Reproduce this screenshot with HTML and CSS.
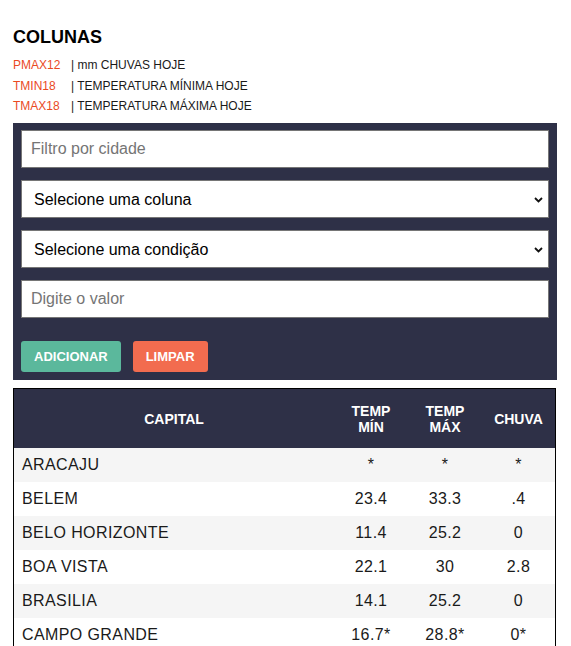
FILE: index.html
```html
<!DOCTYPE html>
<html lang="pt-BR">
<head>
<meta charset="utf-8">
<title>Colunas</title>
<link rel="stylesheet" href="styles.css">
</head>
<body>
<div class="page">
  <h2 class="title">COLUNAS</h2>
  <div class="legend">
    <div class="legend-row"><span class="code">PMAX12</span><span class="desc">| mm CHUVAS HOJE</span></div>
    <div class="legend-row"><span class="code">TMIN18</span><span class="desc">| TEMPERATURA MÍNIMA HOJE</span></div>
    <div class="legend-row"><span class="code">TMAX18</span><span class="desc">| TEMPERATURA MÁXIMA HOJE</span></div>
  </div>

  <div class="panel">
    <input class="field" type="text" placeholder="Filtro por cidade">
    <div class="select-wrap">
      <select class="field select">
        <option>Selecione uma coluna</option>
      </select>
      <svg class="chevron" width="9" height="6" viewBox="0 0 9 6"><path d="M1 1 L4.5 4.5 L8 1" fill="none" stroke="#111" stroke-width="1.8"/></svg>
    </div>
    <div class="select-wrap">
      <select class="field select">
        <option>Selecione uma condição</option>
      </select>
      <svg class="chevron" width="9" height="6" viewBox="0 0 9 6"><path d="M1 1 L4.5 4.5 L8 1" fill="none" stroke="#111" stroke-width="1.8"/></svg>
    </div>
    <input class="field" type="text" placeholder="Digite o valor">
    <div class="buttons">
      <button class="btn btn-add">ADICIONAR</button>
      <button class="btn btn-clear">LIMPAR</button>
    </div>
  </div>

  <table class="data">
    <thead>
      <tr>
        <th class="col-city">CAPITAL</th>
        <th class="col-num">TEMP<br>MÍN</th>
        <th class="col-num">TEMP<br>MÁX</th>
        <th class="col-rain">CHUVA</th>
      </tr>
    </thead>
    <tbody>
      <tr><td>ARACAJU</td><td>*</td><td>*</td><td>*</td></tr>
      <tr><td>BELEM</td><td>23.4</td><td>33.3</td><td>.4</td></tr>
      <tr><td>BELO HORIZONTE</td><td>11.4</td><td>25.2</td><td>0</td></tr>
      <tr><td>BOA VISTA</td><td>22.1</td><td>30</td><td>2.8</td></tr>
      <tr><td>BRASILIA</td><td>14.1</td><td>25.2</td><td>0</td></tr>
      <tr><td>CAMPO GRANDE</td><td>16.7*</td><td>28.8*</td><td>0*</td></tr>
    </tbody>
  </table>
</div>
</body>
</html>
```

FILE: styles.css
```css
html, body {
  margin: 0;
  padding: 0;
  background: #fff;
}

body {
  font-family: "Liberation Sans", Arial, sans-serif;
  color: #111;
}

.page {
  width: 544px;
  padding: 26px 0 0 13px;
}

.title {
  margin: 0;
  font-size: 18px;
  line-height: 22px;
  font-weight: bold;
  color: #000;
}

.legend {
  margin-top: 7px;
  font-size: 12px;
  line-height: 20.5px;
}

.legend-row {
  display: flex;
}

.code {
  width: 58px;
  color: #ea4a1f;
}

.desc {
  color: #1a1a1a;
}

.panel {
  margin-top: 6.5px;
  background: #2e3047;
  padding: 7px 8px 8px;
  display: flex;
  flex-direction: column;
}

.field {
  box-sizing: border-box;
  width: 100%;
  height: 38px;
  margin: 0 0 12px;
  border: 1px solid #767676;
  background: #fff;
  font-family: "Liberation Sans", Arial, sans-serif;
  font-size: 16px;
  color: #000;
  padding: 0 9px;
  border-radius: 0;
  outline: none;
}

.field::placeholder {
  color: #757575;
}

.select-wrap {
  position: relative;
}

.select {
  appearance: none;
  -webkit-appearance: none;
  padding: 0 12px;
  display: block;
}

.chevron {
  position: absolute;
  right: 6px;
  top: 17px;
  pointer-events: none;
}

.buttons {
  display: flex;
  gap: 12px;
  margin-top: 11px;
}

.btn {
  height: 31px;
  border: none;
  border-radius: 3px;
  padding: 0 13px;
  font-family: "Liberation Sans", Arial, sans-serif;
  font-size: 13px;
  font-weight: bold;
  color: #fff;
}

.btn-add {
  background: #5bb89c;
}

.btn-clear {
  background: #f26c4f;
}

.data {
  margin-top: 8px;
  width: 543px;
  border-collapse: collapse;
  border: 1px solid #000;
}

.data th {
  background: #2e3047;
  color: #fff;
  font-size: 14px;
  font-weight: bold;
  line-height: 16px;
  height: 59px;
  padding: 0;
  text-align: center;
}

.col-city {
  width: 320px;
}

.col-num {
  width: 74px;
}

.col-rain {
  width: 73px;
}

.data td {
  height: 34px;
  padding: 0;
  font-size: 16px;
  letter-spacing: 0.4px;
  color: #1a1a1a;
  text-align: center;
}

.data td:first-child {
  text-align: left;
  padding-left: 8px;
}

.data tbody tr:nth-child(odd) td {
  background: #f5f5f5;
}
```
